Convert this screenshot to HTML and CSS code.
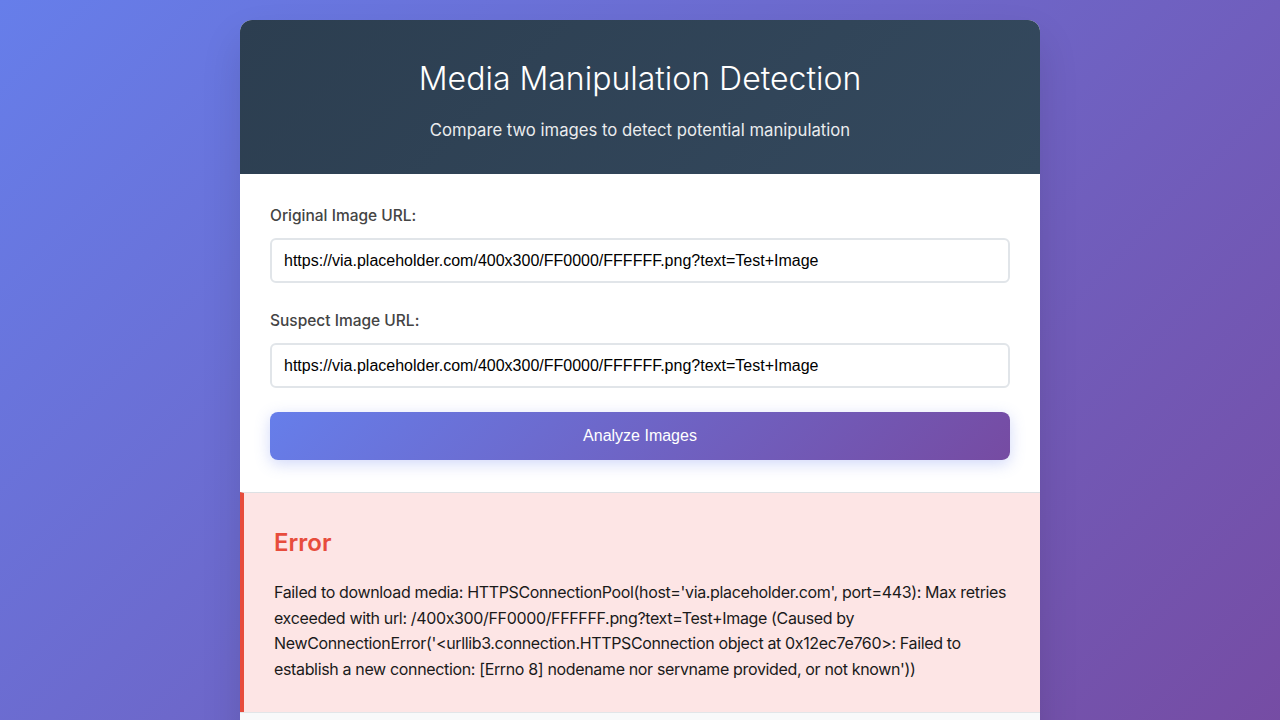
FILE: index.html
```html
<!DOCTYPE html>
<html lang="en">
<head>
<meta charset="utf-8">
<title>Media Manipulation Detection</title>
<link rel="stylesheet" href="styles.css">
</head>
<body>
<div class="container">
  <header class="header">
    <h1 class="title">Media Manipulation Detection</h1>
    <p class="subtitle">Compare two images to detect potential manipulation</p>
  </header>
  <form class="form">
    <div class="group">
      <label class="label" for="orig">Original Image URL:</label>
      <input class="input" id="orig" type="text" value="https://via.placeholder.com/400x300/FF0000/FFFFFF.png?text=Test+Image">
    </div>
    <div class="group">
      <label class="label" for="susp">Suspect Image URL:</label>
      <input class="input" id="susp" type="text" value="https://via.placeholder.com/400x300/FF0000/FFFFFF.png?text=Test+Image">
    </div>
    <button class="button" type="button">Analyze Images</button>
  </form>
  <section class="error">
    <h3 class="error-title">Error</h3>
    <p class="error-text">Failed to download media: HTTPSConnectionPool(host='via.placeholder.com', port=443): Max retries exceeded with url: /400x300/FF0000/FFFFFF.png?text=Test+Image (Caused by NewConnectionError('&lt;urllib3.connection.HTTPSConnection object at 0x12ec7e760&gt;: Failed to establish a new connection: [Errno 8] nodename nor servname provided, or not known'))</p>
  </section>
  <div class="results"></div>
</div>
</body>
</html>
```
FILE: styles.css
```css
* { box-sizing: border-box; }
html, body { margin: 0; }
body {
  min-height: 100vh;
  padding: 20px;
  font-family: Inter, "Noto Sans", sans-serif;
  font-feature-settings: "calt" 0;
  background: linear-gradient(135deg, #667eea 0%, #764ba2 100%);
  color: #333;
}
.container {
  width: 800px;
  margin: 0 auto;
  background: #fff;
  border-radius: 12px;
  overflow: hidden;
  box-shadow: 0 20px 40px rgba(0, 0, 0, 0.12);
}
.header {
  background: linear-gradient(135deg, #2c3e50 0%, #34495e 100%);
  color: #fff;
  text-align: center;
  padding: 40px 30px 32px;
}
.title {
  margin: 0 0 20px;
  font-size: 32px;
  line-height: 38px;
  font-weight: 300;
}
.subtitle {
  margin: 0;
  font-size: 16.7px;
  line-height: 24px;
  opacity: 0.9;
}
.form {
  padding: 30px 30px 32px;
}
.group {
  margin-bottom: 26px;
}
.group:nth-child(2) { margin-bottom: 24px; }
.label {
  display: block;
  font-size: 15.5px;
  line-height: 24px;
  font-weight: 500;
  color: #444;
  margin-bottom: 10px;
}
.input {
  display: block;
  width: 100%;
  height: 45px;
  padding: 0 12px;
  border: 2px solid #e1e5e9;
  border-radius: 6px;
  font-family: "Liberation Sans", Arial, sans-serif;
  font-size: 16px;
  color: #000;
  background: #fff;
}
.button {
  display: block;
  width: 100%;
  height: 48px;
  border: 0;
  border-radius: 8px;
  background: linear-gradient(135deg, #667eea 0%, #764ba2 100%);
  color: #fff;
  font-family: "Liberation Sans", Arial, sans-serif;
  font-size: 16px;
  font-weight: 500;
  box-shadow: 0 4px 15px rgba(102, 126, 234, 0.3);
}
.error {
  background: #fde5e5;
  border-top: 1px solid #dde1e4;
  border-left: 4px solid #e74c3c;
  padding: 30px;
}
.error-title {
  margin: 5px 0 23px;
  font-size: 24px;
  line-height: 29px;
  font-weight: 600;
  color: #e74c3c;
}
.error-text {
  margin: 0;
  font-size: 16px;
  line-height: 25.6px;
  letter-spacing: -0.35px;
  color: #1a1a1a;
}
.results {
  height: 40px;
  background: #f8f9fa;
  border-top: 1px solid #e2e5e8;
}
```
